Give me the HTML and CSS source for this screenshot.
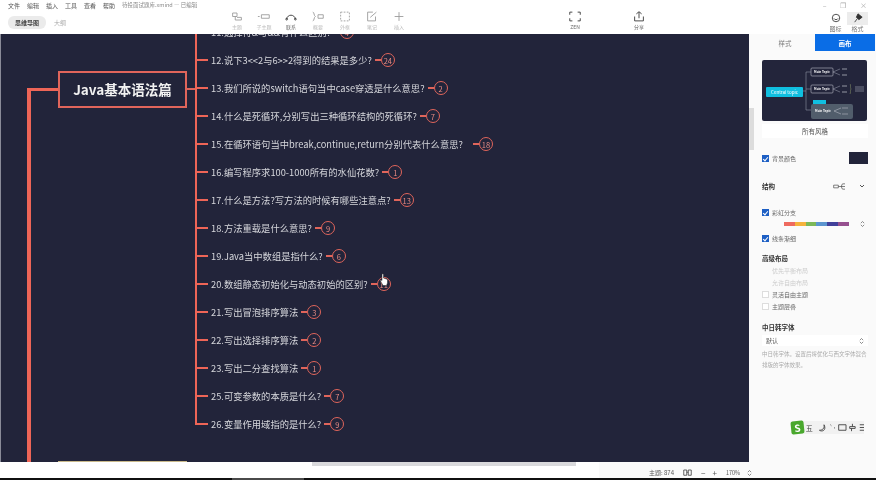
FILE: index.html
```html
<!DOCTYPE html>
<html lang="zh-CN">
<head>
    <meta charset="UTF-8">
    <meta name="viewport" content="width=device-width, initial-scale=1.0">
    <title>待投面试题库.xmind</title>
    <link rel="stylesheet" href="styles.css">
</head>
<body>
    <!-- Top bar -->
    <div class="topbar">
        <div class="topbar-left">
            <div class="menu">
                <span>文件</span><span>编辑</span><span>插入</span><span>工具</span><span>查看</span><span>帮助</span>
                <span class="doc-title">待投面试题库.xmind — 已编辑</span>
            </div>
            <div class="view-tabs">
                <span class="view-tab active">思维导图</span>
                <span class="view-tab">大纲</span>
            </div>
        </div>
        <div class="tools">
            <div class="tool"><svg viewBox="0 0 16 12"><path d="M3 2h5v4H3zM6 6v4h7V7H8"/></svg><span>主题</span></div>
            <div class="tool"><svg viewBox="0 0 16 12"><path d="M1 6h2M5 4h9v4H5z"/></svg><span>子主题</span></div>
            <div class="tool tool-dark"><svg viewBox="0 0 16 12"><path d="M3 9C4 3 12 3 13 9"/><circle cx="3" cy="9" r="1"/><circle cx="13" cy="9" r="1"/></svg><span>联系</span></div>
            <div class="tool"><svg viewBox="0 0 16 12"><path d="M2 1c2 0 1 4 3 5-2 1-1 5-3 5M8 4h6v4H8z"/></svg><span>概要</span></div>
            <div class="tool"><svg viewBox="0 0 16 12"><path d="M3 1h10v10H3z" stroke-dasharray="2 1.5"/></svg><span>外框</span></div>
            <div class="tool"><svg viewBox="0 0 16 12"><path d="M12 6v5H3V1h6M6 7l7-6"/></svg><span>笔记</span></div>
            <div class="tool"><svg viewBox="0 0 16 12"><path d="M8 1v10M3 6h10"/></svg><span>插入</span></div>
        </div>
        <div class="tool tool-dark tool-zen"><svg viewBox="0 0 16 12"><path d="M2 4V1h3M11 1h3v3M14 8v3h-3M5 11H2V8"/></svg><span>ZEN</span></div>
        <div class="tool tool-dark tool-share"><svg viewBox="0 0 16 12"><path d="M3 6v5h10V6M8 8V1M5 3l3-2.500L11 3"/></svg><span>分享</span></div>
        <div class="topbar-right">
            <div class="win-controls"><span>–</span><span>❐</span><span>×</span></div>
            <div class="side-tools">
                <div class="side-tool"><svg viewBox="0 0 12 12"><circle cx="6" cy="6" r="4.500"/><path d="M3.500 6.500c1 2 4 2 5 0"/></svg><span>图标</span></div>
                <div class="side-tool active"><svg viewBox="0 0 12 12"><path class="solid" d="M6 1l5 4-4 3-3-3zM5 7L2 11"/></svg><span>格式</span></div>
            </div>
        </div>
    </div>

    <div class="main">
        <!-- Mind map canvas -->
        <div class="canvas">
            <div class="root-line"></div>
            <div class="root-link"></div>
            <div class="root-topic">Java基本语法篇</div>
            <div class="next-topic"></div>
            <ul class="topics">
                <li><span class="label">11.选择符&amp;与&amp;&amp;有什么区别?</span><i class="dash"></i><b class="count">4</b></li>
                <li><span class="label">12.说下3&lt;&lt;2与6&gt;&gt;2得到的结果是多少?</span><i class="dash"></i><b class="count">24</b></li>
                <li><span class="label">13.我们所说的switch语句当中case穿透是什么意思?</span><i class="dash"></i><b class="count">2</b></li>
                <li><span class="label">14.什么是死循环,分别写出三种循环结构的死循环?</span><i class="dash"></i><b class="count">7</b></li>
                <li><span class="label">15.在循环语句当中break,continue,return分别代表什么意思?</span><i class="dash dash-far"></i><b class="count">18</b></li>
                <li><span class="label">16.编写程序求100-1000所有的水仙花数?</span><i class="dash"></i><b class="count">1</b></li>
                <li><span class="label">17.什么是方法?写方法的时候有哪些注意点?</span><i class="dash"></i><b class="count">13</b></li>
                <li><span class="label">18.方法重载是什么意思?</span><i class="dash"></i><b class="count">9</b></li>
                <li><span class="label">19.Java当中数组是指什么?</span><i class="dash"></i><b class="count">6</b></li>
                <li><span class="label">20.数组静态初始化与动态初始的区别?</span><i class="dash"></i><b class="count">11</b></li>
                <li><span class="label">21.写出冒泡排序算法</span><i class="dash"></i><b class="count">3</b></li>
                <li><span class="label">22.写出选择排序算法</span><i class="dash"></i><b class="count">2</b></li>
                <li><span class="label">23.写出二分查找算法</span><i class="dash"></i><b class="count">1</b></li>
                <li><span class="label">25.可变参数的本质是什么?</span><i class="dash"></i><b class="count">7</b></li>
                <li class="last"><span class="label">26.变量作用域指的是什么?</span><i class="dash"></i><b class="count">9</b></li>
            </ul>
            <svg class="cursor" viewBox="0 0 10 13"><path d="M3 1.500c0-1 1.500-1 1.500 0V5l3 1c1 .5 1 1 1 2v2L7.500 12.500H4L1.500 8c-.5-1 .5-1.500 1.500-.5z"/></svg>
        </div>

        <!-- Format panel -->
        <div class="panel">
            <div class="scroll-thumb"></div>
            <div class="panel-tabs">
                <span class="panel-tab">样式</span>
                <span class="panel-tab active">画布</span>
            </div>
            <div class="panel-body">
                <svg class="preview" viewBox="0 0 105 61">
                    <rect width="105" height="61" rx="2" fill="#23253b"/>
                    <path d="M41 31H44M44 12V50M44 12H49M44 29H49M44 50H49M71 12L78 9M71 12L78 15M71 29L78 26M71 29L78 32" fill="none" stroke="#8f92a3" stroke-width=".6"/>
                    <path d="M80 9H85M80 15H85M80 26H85M80 32H85" fill="none" stroke="#c5c7d0" stroke-width=".7"/>
                    <path d="M88 24c1 0 0 4 1 5-1 1 0 4-1 5" fill="none" stroke="#8f9a6a" stroke-width=".5"/>
                    <rect x="4" y="27" width="37" height="10" rx="1" fill="#10bfe0"/>
                    <text x="22.500" y="33.800" class="preview-central">Central topic</text>
                    <rect x="49" y="8" width="22" height="8" rx="1" fill="#23253b" stroke="#b8bac6" stroke-width=".6"/>
                    <text x="60" y="13" class="preview-main">Main Topic</text>
                    <rect x="49" y="25" width="22" height="8" rx="1" fill="#23253b" stroke="#b8bac6" stroke-width=".6"/>
                    <text x="60" y="30" class="preview-main">Main Topic</text>
                    <rect x="51" y="40" width="13" height="5" fill="#10bfe0"/>
                    <rect x="49" y="44" width="42" height="15" rx="2" fill="#515d6b"/>
                    <text x="61" y="52" class="preview-main">Main Topic</text>
                    <path d="M72 51L79 48M72 51L79 54M80 48H86M80 54H86" fill="none" stroke="#c5c7d0" stroke-width=".5"/>
                    <rect x="93" y="26" width="9" height="6" fill="#4a4d60"/>
                </svg>
                <div class="panel-button">所有风格</div>

                <div class="option option-bg">
                    <span class="check on"></span><span class="option-label">背景颜色</span>
                    <span class="swatch"></span>
                </div>

                <div class="option option-structure">
                    <span class="panel-heading">结构</span>
                    <svg class="structure-icon" viewBox="0 0 24 12"><path d="M1 4h7v4H1zM8 6h4M12 6c2 0 0-4 3-4h3M12 6h6M12 6c2 0 0 4 3 4h3"/></svg>
                    <svg class="chevron" viewBox="0 0 6 4"><path d="M1 1l2 2 2-2"/></svg>
                </div>

                <div class="option option-rainbow">
                    <span class="check on"></span><span class="option-label">彩虹分支</span>
                </div>
                <div class="rainbow-row">
                    <div class="rainbow">
                        <i class="r1"></i><i class="r2"></i><i class="r3"></i><i class="r4"></i><i class="r5"></i><i class="r6"></i>
                    </div>
                    <svg class="stepper" viewBox="0 0 6 9"><path d="M1 3.500l2-2 2 2M1 5.500l2 2 2-2"/></svg>
                </div>
                <div class="option">
                    <span class="check on"></span><span class="option-label">线条渐细</span>
                </div>

                <div class="panel-heading heading-layout">高级布局</div>
                <div class="option-sub disabled">优先平衡布局</div>
                <div class="option-sub disabled">允许自由布局</div>
                <div class="option option-tight">
                    <span class="check"></span><span class="option-label">灵活自由主题</span>
                </div>
                <div class="option option-tight">
                    <span class="check"></span><span class="option-label">主题层叠</span>
                </div>

                <div class="panel-heading heading-font">中日韩字体</div>
                <div class="select">
                    <span>默认</span>
                    <svg class="stepper" viewBox="0 0 6 9"><path d="M1 3.500l2-2 2 2M1 5.500l2 2 2-2"/></svg>
                </div>
                <p class="hint">中日韩字体。设置后将优化与西文字体混合排版的字体效果。</p>
            </div>
            <div class="ime">
                <span class="ime-logo">S</span><span class="ime-wubi">五</span>
                <svg viewBox="0 0 50 12"><path d="M8 3c1 4-2 6-5 6 3 2 8 0 5-6zM15 3l1 1M19 6l1 1M24 3h8v6h-8zM39 2v3M36 5h6v2h-6zM38 7v3M47 3h5M47 6h5M47 9h5"/></svg>
            </div>
        </div>
    </div>

    <!-- Status bar -->
    <div class="statusbar">
        <div class="hscroll"></div>
        <div class="status-items">
            <span>主题: 874</span>
            <svg class="book" viewBox="0 0 12 10"><path d="M1 1h4v7H1zM7 1h4v7H7zM5 4h2"/></svg>
            <span class="zoom-btn">−</span>
            <span class="zoom-btn">+</span>
            <span class="zoom-value">170%</span>
            <svg class="stepper" viewBox="0 0 6 9"><path d="M1 3.500l2-2 2 2M1 5.500l2 2 2-2"/></svg>
        </div>
    </div>
    <div class="taskbar"><div class="taskbar-item"></div></div>
</body>
</html>
```

FILE: styles.css
```css
* {
    box-sizing: border-box;
}

body {
    margin: 0;
    width: 876px;
    height: 480px;
    overflow: hidden;
    display: flex;
    flex-direction: column;
    background: #fafafa;
    color: #444;
    font-family: "Noto Sans CJK SC", "Noto Sans", sans-serif;
    font-size: 6px;
    filter: blur(0.35px); /* the reference is a soft video frame */
}

svg {
    fill: none;
    stroke: currentColor;
}

/* Top bar */
.topbar {
    height: 34px;
    flex: none;
    display: flex;
    background: #fff;
    position: relative;
    z-index: 1;
}

.topbar-left {
    width: 227px;
    padding: 1px 0 0 8px;
}

.menu {
    display: flex;
    gap: 7px;
    height: 9px;
    line-height: 9px;
    font-size: 6px;
    color: #555;
}

.doc-title {
    font-size: 5.500px;
    color: #888;
}

.view-tabs {
    display: flex;
    align-items: center;
    margin-top: 6px;
    gap: 8px;
}

.view-tab {
    color: #aaa;
    font-size: 6px;
}

.view-tab.active {
    background: #ebebeb;
    color: #444;
    font-weight: 700;
    border-radius: 6px;
    padding: 2px 7px;
}

.tools {
    display: flex;
    gap: 7px;
    padding-top: 11px;
}

.tool {
    width: 20px;
    display: flex;
    flex-direction: column;
    align-items: center;
    color: #999;
    font-size: 5px;
    gap: 1px;
}

.tool svg {
    width: 14px;
    height: 11px;
    stroke-width: 1;
}

.tool span {
    color: #bbb;
    line-height: 7px;
}

.tool-dark {
    color: #333;
}

.tool-dark span {
    color: #666;
}

.tool-zen {
    margin: 11px 0 0 156px;
}

.tool-share {
    margin: 11px 0 0 44px;
}

.topbar-right {
    margin-left: auto;
    width: 60px;
}

.win-controls {
    display: flex;
    justify-content: space-around;
    height: 12px;
    line-height: 10px;
    font-size: 7px;
    color: #aaa;
    padding-right: 2px;
}

.side-tools {
    display: flex;
    gap: 1px;
    margin-left: 9px;
}

.side-tool {
    width: 21px;
    height: 22px;
    display: flex;
    flex-direction: column;
    align-items: center;
    padding-top: 1px;
    color: #333;
    gap: 1px;
}

.side-tool svg {
    width: 10px;
    height: 10px;
}

.side-tool .solid {
    fill: #333;
}

.side-tool span {
    color: #777;
    line-height: 9px;
}

.side-tool.active {
    background: linear-gradient(#ececec 58%, #fff 58%);
}

/* Main */
.main {
    height: 428px;
    flex: none;
    display: flex;
}

.canvas {
    width: 749px;
    flex: none;
    position: relative;
    overflow: hidden;
    background: #22243a;
    border-left: 1px solid #8a8b98;
}

.root-line {
    position: absolute;
    left: 26px;
    top: 54px;
    bottom: 0;
    width: 4px;
    background: #ee6557;
}

.root-link {
    position: absolute;
    left: 26px;
    top: 54px;
    width: 31px;
    height: 3px;
    background: #ee6557;
}

.root-topic {
    position: absolute;
    left: 57px;
    top: 37px;
    width: 129px;
    height: 37px;
    display: flex;
    align-items: center;
    justify-content: center;
    padding-bottom: 2px;
    border: 2px solid #e0655b;
    color: #f1f1f1;
    font-size: 13.500px;
    font-weight: 700;
}

.root-topic::after {
    content: "";
    position: absolute;
    left: 127px;
    top: 15px;
    width: 10px;
    height: 2px;
    background: #e0655b;
}

.next-topic {
    position: absolute;
    left: 57px;
    bottom: 0;
    width: 129px;
    height: 1px;
    background: #c9b98a;
}

.topics {
    position: absolute;
    left: 194px;
    top: -16px;
    margin: 0;
    padding: 0;
    list-style: none;
}

.topics li {
    height: 28px;
    display: flex;
    align-items: center;
    color: #d6d7dc;
    font-size: 9.300px;
    white-space: nowrap;
    padding-left: 14px;
    position: relative;
    border-left: 2px solid #ee6557;
}

.topics li::before {
    content: "";
    position: absolute;
    left: 0;
    top: 13px;
    width: 11px;
    height: 2px;
    background: #ee6557;
}

/* the last branch ends the trunk, its row hangs below the border */
.topics .last {
    height: 15px;
    align-items: flex-start;
}

.topics .last .label,
.topics .last .count {
    margin-top: 7px;
}

.topics .last .dash {
    margin-top: 13px;
}

.dash {
    width: 6px;
    height: 1.500px;
    margin-left: 3px;
    background: #e0655b;
    flex: none;
}

.dash-far {
    margin-left: 10px;
}

.count {
    width: 14px;
    height: 14px;
    flex: none;
    border: 1px solid #e0655b;
    border-radius: 50%;
    display: flex;
    align-items: center;
    justify-content: center;
    color: #e88c84;
    font-size: 7.500px;
    font-weight: 400;
}

.cursor {
    position: absolute;
    left: 378px;
    top: 239px;
    width: 10px;
    height: 13px;
    fill: #fff;
    stroke: #222;
    stroke-width: .5;
}

/* Format panel */
.panel {
    flex: 1;
    position: relative;
    background: #fafafa;
}

.scroll-thumb {
    position: absolute;
    left: 0;
    top: 74px;
    width: 5px;
    height: 42px;
    background: #dcdcdc;
}

.panel-tabs {
    display: flex;
    height: 17px;
    padding-left: 6px;
    align-items: stretch;
}

.panel-tab {
    flex: 1;
    display: flex;
    align-items: center;
    justify-content: center;
    color: #777;
    font-size: 6.500px;
}

.panel-tab.active {
    background: #0a6de6;
    color: #fff;
    font-weight: 700;
    margin-right: 1px;
}

.panel-body {
    padding: 9px 8px 0 13px;
}

.preview {
    display: block;
    width: 105px;
    height: 61px;
    stroke: none;
}

.preview-central {
    fill: #fff;
    font-size: 4.500px;
    text-anchor: middle;
}

.preview-main {
    fill: #fff;
    font-size: 3px;
    font-weight: 700;
    text-anchor: middle;
}

.panel-button {
    height: 14px;
    margin-top: 3px;
    background: #fff;
    text-align: center;
    line-height: 14px;
    color: #555;
    font-size: 6.500px;
}

.option {
    display: flex;
    align-items: center;
    gap: 3px;
    height: 10px;
}

.option-bg {
    margin-top: 15px;
}

.option-structure {
    margin-top: 18px;
}

.option-rainbow {
    margin-top: 16px;
}

.option-tight {
    margin-top: 2px;
}

.check {
    width: 7px;
    height: 7px;
    flex: none;
    background: #fff;
    border: 1px solid #ddd;
}

.check.on {
    background: #1d5fc4;
    border-color: #1d5fc4;
    position: relative;
}

.check.on::after {
    content: "";
    position: absolute;
    left: 1px;
    top: 0;
    width: 2px;
    height: 4px;
    border: solid #fff;
    border-width: 0 1px 1px 0;
    transform: rotate(40deg);
}

.option-label {
    color: #666;
    font-size: 6px;
}

.swatch {
    width: 19px;
    height: 12px;
    margin-left: auto;
    background: #22243a;
}

.panel-heading {
    color: #333;
    font-size: 6.500px;
    font-weight: 700;
}

.structure-icon {
    width: 16px;
    height: 9px;
    margin: 0 7px 0 auto;
    color: #444;
}

.chevron {
    width: 6px;
    height: 4px;
    margin-right: 3px;
    color: #555;
}

.rainbow-row {
    display: flex;
    align-items: center;
    justify-content: space-between;
    height: 8px;
    margin: 3px 3px 5px 22px;
}

.rainbow {
    width: 65px;
    height: 4px;
    display: flex;
}

.rainbow i {
    flex: 1;
}

.r1 { background: #ee6a5f; }
.r2 { background: #f5b23c; }
.r3 { background: #7cb858; }
.r4 { background: #5b95cf; }
.r5 { background: #41409a; }
.r6 { background: #96508f; }

.stepper {
    width: 5px;
    height: 8px;
    color: #555;
    stroke-width: .8;
    flex: none;
}

.heading-layout {
    margin-top: 11px;
    line-height: 9px;
}

.option-sub {
    margin: 3px 0 0 10px;
    line-height: 9px;
}

.disabled {
    color: #ccc;
}

.heading-font {
    margin-top: 12px;
    line-height: 9px;
}

.select {
    display: flex;
    justify-content: space-between;
    align-items: center;
    height: 11px;
    margin-top: 3px;
    padding: 0 4px;
    background: #fff;
    color: #555;
}

.hint {
    margin: 3px 0 0;
    line-height: 11px;
    font-size: 5.500px;
    color: #aaa;
}

.ime {
    position: absolute;
    left: 42px;
    top: 387px;
    width: 73px;
    height: 13px;
    display: flex;
    align-items: center;
    gap: 2px;
    background: #f1f1f1;
    color: #444;
    font-size: 7px;
}

.ime-logo {
    width: 13px;
    height: 13px;
    background: #4aa82e;
    color: #fff;
    font-weight: 700;
    font-size: 10px;
    line-height: 13px;
    text-align: center;
    border-radius: 2px;
    transform: rotate(-6deg);
}

.ime svg {
    width: 50px;
    height: 11px;
}

/* Status bar */
.statusbar {
    height: 16px;
    flex: none;
    display: flex;
    justify-content: space-between;
    background: #fff;
    padding-left: 312px;
}

.hscroll {
    width: 264px;
    height: 4px;
    background: #d9d9dc;
}

.status-items {
    display: flex;
    align-items: center;
    gap: 7px;
    width: 277px;
    padding: 5px 0 0 50px;
    background: #fafafa;
    color: #555;
    font-size: 6px;
}

.book {
    width: 9px;
    height: 8px;
    margin: 0 2px;
    color: #333;
}

.zoom-btn {
    font-size: 8px;
    line-height: 8px;
}

.zoom-value {
    font-size: 5.500px;
    margin-left: 2px;
}

.taskbar {
    flex: 1;
    background: #101010;
    padding-left: 232px;
}

.taskbar-item {
    width: 72px;
    height: 2px;
    background: #4a4a4a;
}
```
